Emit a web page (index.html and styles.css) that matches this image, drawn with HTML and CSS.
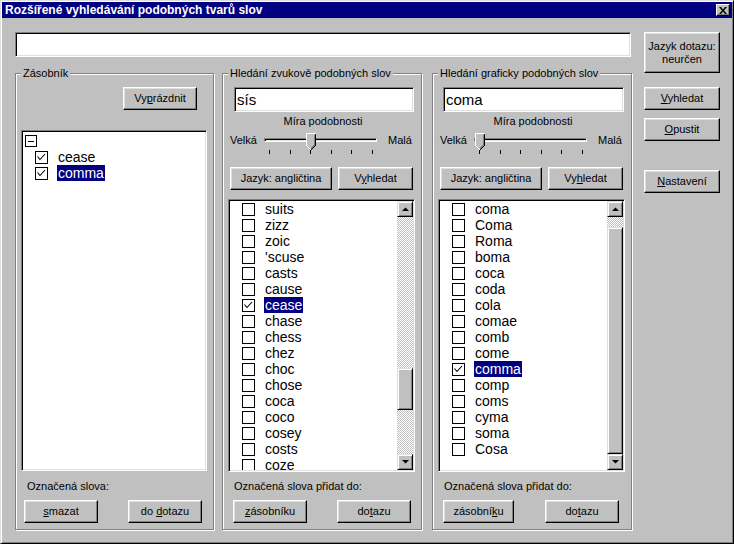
FILE: index.html
```html
<!DOCTYPE html>
<html lang="cs">
<head>
<meta charset="utf-8">
<title>Rozšířené vyhledávání podobných tvarů slov</title>
<link rel="stylesheet" href="styles.css">
</head>
<body>
<div class="window">
  <div class="titlebar">
    <span class="title">Rozšířené vyhledávání podobných tvarů slov</span>
    <span class="close-btn">
      <svg width="8" height="7" viewBox="0 0 8 7"><path d="M0 0h2l2 2.5L6 0h2L5 3.5 8 7H6L4 4.5 2 7H0l3-3.5z" fill="#000"/></svg>
    </span>
  </div>
  <div class="client">
    <div class="main">
      <div class="field query"></div>
      <div class="groups">
        <!-- Zásobník -->
        <section class="group g-left">
          <span class="legend">Zásobník</span>
          <button class="btn b-empty">Vy<u>p</u>rázdnit</button>
          <div class="list tree">
            <div class="items">
              <div class="row root"><span class="minus"><span class="minus-bar"></span></span></div>
              <div class="row"><span class="cb"><svg width="11" height="11" viewBox="0 0 11 11"><polyline points="1.5,4.5 4,7.5 9,2" fill="none" stroke="#000" stroke-width="1.1"/></svg></span><span class="lbl">cease</span></div>
              <div class="row"><span class="cb"><svg width="11" height="11" viewBox="0 0 11 11"><polyline points="1.5,4.5 4,7.5 9,2" fill="none" stroke="#000" stroke-width="1.1"/></svg></span><span class="lbl sel">comma</span></div>
            </div>
          </div>
          <div class="caption c-left">Označená slova:</div>
          <div class="btn-row br-left">
            <button class="btn b-smazat"><u>s</u>mazat</button>
            <button class="btn b-dodotazu">do <u>d</u>otazu</button>
          </div>
        </section>

        <!-- zvukově -->
        <section class="group g-mid">
          <span class="legend">Hledání zvukově podobných slov</span>
          <div class="field word f-mid">sís</div>
          <div class="mira">Míra podobnosti</div>
          <div class="slider-row">
            <span class="s-lbl velka">Velká</span>
            <div class="slider">
              <div class="channel"></div>
              <span class="thumb t-mid">
                <svg width="10" height="17" viewBox="0 0 10 17" shape-rendering="crispEdges"><polygon points="0,0 10,0 10,12 5,17 0,12" fill="#c0c0c0"/><polyline points="0.5,12 0.5,0.5 9.5,0.5" fill="none" stroke="#fff"/><polyline points="9.5,0.5 9.5,12.5 5,17" fill="none" stroke="#000"/><polyline points="0.5,12.5 5,17" fill="none" stroke="#fff"/><polyline points="8.5,1.5 8.5,12 5,15.5" fill="none" stroke="#808080"/></svg>
              </span>
              <div class="ticks"><i></i><i></i><i></i><i></i><i></i><i></i></div>
            </div>
            <span class="s-lbl mala">Malá</span>
          </div>
          <div class="btn-row br-top">
            <button class="btn b-jazyk">Jazyk: angličtina</button>
            <button class="btn b-hledat">V<u>y</u>hledat</button>
          </div>
          <div class="list words">
            <div class="items">
              <div class="row"><span class="cb"></span><span class="lbl">suits</span></div>
              <div class="row"><span class="cb"></span><span class="lbl">zizz</span></div>
              <div class="row"><span class="cb"></span><span class="lbl">zoic</span></div>
              <div class="row"><span class="cb"></span><span class="lbl">'scuse</span></div>
              <div class="row"><span class="cb"></span><span class="lbl">casts</span></div>
              <div class="row"><span class="cb"></span><span class="lbl">cause</span></div>
              <div class="row"><span class="cb"><svg width="11" height="11" viewBox="0 0 11 11"><polyline points="1.5,4.5 4,7.5 9,2" fill="none" stroke="#000" stroke-width="1.1"/></svg></span><span class="lbl sel">cease</span></div>
              <div class="row"><span class="cb"></span><span class="lbl">chase</span></div>
              <div class="row"><span class="cb"></span><span class="lbl">chess</span></div>
              <div class="row"><span class="cb"></span><span class="lbl">chez</span></div>
              <div class="row"><span class="cb"></span><span class="lbl">choc</span></div>
              <div class="row"><span class="cb"></span><span class="lbl">chose</span></div>
              <div class="row"><span class="cb"></span><span class="lbl">coca</span></div>
              <div class="row"><span class="cb"></span><span class="lbl">coco</span></div>
              <div class="row"><span class="cb"></span><span class="lbl">cosey</span></div>
              <div class="row"><span class="cb"></span><span class="lbl">costs</span></div>
              <div class="row"><span class="cb"></span><span class="lbl">coze</span></div>
            </div>
            <div class="scrollbar">
              <span class="sb-btn"><svg width="7" height="4" viewBox="0 0 7 4"><polygon points="0,4 7,4 3.5,0.5" fill="#000"/></svg></span>
              <span class="sb-track" style="height:151px"></span>
              <span class="sb-thumb" style="height:42px"></span>
              <span class="sb-track grow"></span>
              <span class="sb-btn"><svg width="7" height="4" viewBox="0 0 7 4"><polygon points="0,0 7,0 3.5,3.5" fill="#000"/></svg></span>
            </div>
          </div>
          <div class="caption c-mid">Označená slova přidat do:</div>
          <div class="btn-row br-bottom">
            <button class="btn b-zas-m"><u>z</u>ásobníku</button>
            <button class="btn b-dot-m">do<u>t</u>azu</button>
          </div>
        </section>

        <!-- graficky -->
        <section class="group g-right">
          <span class="legend">Hledání graficky podobných slov</span>
          <div class="field word f-right">coma</div>
          <div class="mira">Míra podobnosti</div>
          <div class="slider-row">
            <span class="s-lbl velka">Velká</span>
            <div class="slider">
              <div class="channel"></div>
              <span class="thumb t-right">
                <svg width="10" height="17" viewBox="0 0 10 17" shape-rendering="crispEdges"><polygon points="0,0 10,0 10,12 5,17 0,12" fill="#c0c0c0"/><polyline points="0.5,12 0.5,0.5 9.5,0.5" fill="none" stroke="#fff"/><polyline points="9.5,0.5 9.5,12.5 5,17" fill="none" stroke="#000"/><polyline points="0.5,12.5 5,17" fill="none" stroke="#fff"/><polyline points="8.5,1.5 8.5,12 5,15.5" fill="none" stroke="#808080"/></svg>
              </span>
              <div class="ticks"><i></i><i></i><i></i><i></i><i></i><i></i></div>
            </div>
            <span class="s-lbl mala">Malá</span>
          </div>
          <div class="btn-row br-top">
            <button class="btn b-jazyk">Jazyk: angličtina</button>
            <button class="btn b-hledat">Vy<u>h</u>ledat</button>
          </div>
          <div class="list words">
            <div class="items">
              <div class="row"><span class="cb"></span><span class="lbl">coma</span></div>
              <div class="row"><span class="cb"></span><span class="lbl">Coma</span></div>
              <div class="row"><span class="cb"></span><span class="lbl">Roma</span></div>
              <div class="row"><span class="cb"></span><span class="lbl">boma</span></div>
              <div class="row"><span class="cb"></span><span class="lbl">coca</span></div>
              <div class="row"><span class="cb"></span><span class="lbl">coda</span></div>
              <div class="row"><span class="cb"></span><span class="lbl">cola</span></div>
              <div class="row"><span class="cb"></span><span class="lbl">comae</span></div>
              <div class="row"><span class="cb"></span><span class="lbl">comb</span></div>
              <div class="row"><span class="cb"></span><span class="lbl">come</span></div>
              <div class="row"><span class="cb"><svg width="11" height="11" viewBox="0 0 11 11"><polyline points="1.5,4.5 4,7.5 9,2" fill="none" stroke="#000" stroke-width="1.1"/></svg></span><span class="lbl sel">comma</span></div>
              <div class="row"><span class="cb"></span><span class="lbl">comp</span></div>
              <div class="row"><span class="cb"></span><span class="lbl">coms</span></div>
              <div class="row"><span class="cb"></span><span class="lbl">cyma</span></div>
              <div class="row"><span class="cb"></span><span class="lbl">soma</span></div>
              <div class="row"><span class="cb"></span><span class="lbl">Cosa</span></div>
            </div>
            <div class="scrollbar">
              <span class="sb-btn"><svg width="7" height="4" viewBox="0 0 7 4"><polygon points="0,4 7,4 3.5,0.5" fill="#000"/></svg></span>
              <span class="sb-track" style="height:10px"></span>
              <span class="sb-thumb grow"></span>
              <span class="sb-btn"><svg width="7" height="4" viewBox="0 0 7 4"><polygon points="0,0 7,0 3.5,3.5" fill="#000"/></svg></span>
            </div>
          </div>
          <div class="caption c-mid">Označená slova přidat do:</div>
          <div class="btn-row br-bottom">
            <button class="btn b-zas-r">zásobní<u>k</u>u</button>
            <button class="btn b-dot-r">do<u>t</u>azu</button>
          </div>
        </section>
      </div>
    </div>
    <div class="side">
      <button class="btn b-lang">Jazyk dotazu:<br>neurčen</button>
      <button class="btn b-side b-find"><u>V</u>yhledat</button>
      <button class="btn b-side b-quit"><u>O</u>pustit</button>
      <button class="btn b-side b-settings"><u>N</u>astavení</button>
    </div>
  </div>
</div>
</body>
</html>
```

FILE: styles.css
```css
* { box-sizing: border-box; }
html, body { margin: 0; padding: 0; }
body {
  width: 734px;
  height: 544px;
  overflow: hidden;
  background: #c0c0c0;
  color: #000;
  font-family: "Liberation Sans", Arial, sans-serif;
  font-size: 11px;
  line-height: 15px;
}
u { text-decoration: underline; text-underline-offset: 1px; }

.window {
  width: 734px;
  height: 544px;
  background: #c0c0c0;
  border: 1px solid;
  border-color: #dfdfdf #000 #000 #dfdfdf;
  box-shadow: inset 1px 1px 0 #fff, inset -1px -1px 0 #808080;
  padding: 1px;
}
.titlebar {
  height: 16px;
  background: #000080;
  color: #fff;
  display: flex;
  align-items: center;
  justify-content: space-between;
  padding: 0 2px 0 3px;
  font-weight: bold;
  font-size: 12px;
  line-height: 16px;
}
.close-btn {
  width: 14px;
  height: 12px;
  background: #c0c0c0;
  border: 1px solid;
  border-color: #fff #000 #000 #fff;
  box-shadow: inset -1px -1px 0 #808080;
  display: flex;
  align-items: center;
  justify-content: center;
}

.client {
  display: flex;
  align-items: flex-start;
  gap: 11px;
  padding: 14px 0 0 13px;
}
.main { width: 618px; }
.side { width: 76px; display: flex; flex-direction: column; }

/* sunken edit field */
.field {
  background: #fff;
  border: 1px solid;
  border-color: #808080 #fff #fff #808080;
  box-shadow: inset 1px 1px 0 #000, inset -1px -1px 0 #dfdfdf;
}
.query { width: 616px; height: 25px; }
.word {
  height: 25px;
  padding-left: 2px;
  font-size: 15px;
  line-height: 23px;
  margin-top: 13px;
}
.f-mid { margin-left: 11px; width: 180px; }
.f-right { margin-left: 10px; width: 181px; }

/* raised button */
.btn {
  font-family: inherit;
  font-size: 11px;
  line-height: 13px;
  color: #000;
  background: #c0c0c0;
  height: 23px;
  padding: 0;
  margin: 0;
  border: 1px solid;
  border-color: #fff #000 #000 #fff;
  box-shadow: inset -1px -1px 0 #808080, inset 1px 1px 0 #dfdfdf;
  text-align: center;
  flex-shrink: 0;
  white-space: nowrap;
}
.b-lang { width: 76px; height: 41px; }
.b-side { width: 76px; }
.b-find { margin-top: 14px; }
.b-quit { margin-top: 8px; }
.b-settings { margin-top: 29px; }

/* group boxes */
.groups { display: flex; margin-top: 16px; }
.group {
  position: relative;
  height: 457px;
  border: 1px solid #808080;
  box-shadow: inset 1px 1px 0 #fff, 1px 1px 0 #fff;
  display: flex;
  flex-direction: column;
  align-items: flex-start;
}
.g-left { width: 199px; }
.g-mid { width: 200px; margin-left: 8px; }
.g-right { width: 200px; margin-left: 10px; }
.legend {
  position: absolute;
  top: -8px;
  left: 5px;
  padding: 0 2px;
  background: #c0c0c0;
  line-height: 15px;
  white-space: nowrap;
}

.b-empty { margin: 13px 0 0 107px; width: 74px; }

/* lists */
.list {
  background: #fff;
  border: 1px solid;
  border-color: #808080 #fff #fff #808080;
  box-shadow: inset 1px 1px 0 #000, inset -1px -1px 0 #dfdfdf;
  padding: 1px;
  display: flex;
  overflow: hidden;
  font-size: 14px;
  line-height: 16px;
}
.tree { margin: 20px 0 0 5px; width: 186px; height: 341px; }
.tree .items { padding-top: 1px; }
.words { margin: 9px 0 0 5px; width: 187px; height: 273px; }
.items { flex: 1; overflow: hidden; }
.row {
  height: 16px;
  display: flex;
  align-items: center;
  padding-left: 12px;
  white-space: nowrap;
}
.row.root { padding-left: 2px; }
.minus {
  width: 12px;
  height: 12px;
  border: 1px solid #000;
  display: flex;
  align-items: center;
  justify-content: center;
}
.minus-bar { width: 6px; height: 1px; background: #000; }
.cb {
  width: 13px;
  height: 13px;
  border: 1px solid #000;
  background: #fff;
  margin-right: 9px;
  flex-shrink: 0;
  display: flex;
}
.lbl { padding: 0 1px; height: 16px; }
.sel { background: #000080; color: #fff; }

.scrollbar {
  width: 16px;
  flex-shrink: 0;
  display: flex;
  flex-direction: column;
}
.sb-btn, .sb-thumb {
  background: #c0c0c0;
  border: 1px solid;
  border-color: #dfdfdf #000 #000 #dfdfdf;
  box-shadow: inset 1px 1px 0 #fff, inset -1px -1px 0 #808080;
}
.sb-btn {
  height: 16px;
  flex-shrink: 0;
  display: flex;
  align-items: center;
  justify-content: center;
}
.sb-track {
  flex-shrink: 0;
  background: #fff repeating-conic-gradient(#c0c0c0 0 25%, #fff 0 50%) 0 0 / 2px 2px;
}
.grow { flex: 1; }

/* captions & button rows */
.caption { margin: 8px 0 0 11px; white-space: nowrap; }
.c-mid { margin-top: 7px; }
.btn-row { display: flex; }
.br-left { margin-top: 6px; }
.b-smazat { margin-left: 8px; width: 74px; }
.b-dodotazu { margin-left: 30px; width: 74px; }
.br-bottom { margin-top: 6px; }
.b-zas-m { margin-left: 10px; width: 74px; }
.b-dot-m { margin-left: 30px; width: 74px; }
.b-zas-r { margin-left: 10px; width: 71px; }
.b-dot-r { margin-left: 31px; width: 74px; }
.br-top { margin-top: 11px; }
.b-jazyk { margin-left: 7px; width: 102px; }
.b-hledat { margin-left: 6px; width: 75px; }

/* slider */
.mira { align-self: stretch; text-align: center; margin-top: 2px; padding-left: 2px; }
.slider-row { display: flex; align-items: flex-start; margin: 4px 0 0 7px; height: 23px; }
.s-lbl { white-space: nowrap; }
.velka { width: 29px; }
.mala { margin-left: 6px; }
.slider { position: relative; width: 123px; height: 23px; }
.channel {
  margin: 5px 0 0 5px;
  width: 113px;
  height: 4px;
  border: 1px solid;
  border-color: #808080 #fff #fff #808080;
  box-shadow: inset 1px 1px 0 #000;
  background: #dfdfdf;
}
.thumb { position: absolute; top: 0; display: block; line-height: 0; }
.t-mid { left: 47px; }
.t-right { left: 6px; }
.ticks {
  display: flex;
  justify-content: space-between;
  margin: 8px 0 0 10px;
  width: 104px;
  height: 4px;
}
.ticks i { display: block; width: 1px; height: 4px; background: #000; }
```
